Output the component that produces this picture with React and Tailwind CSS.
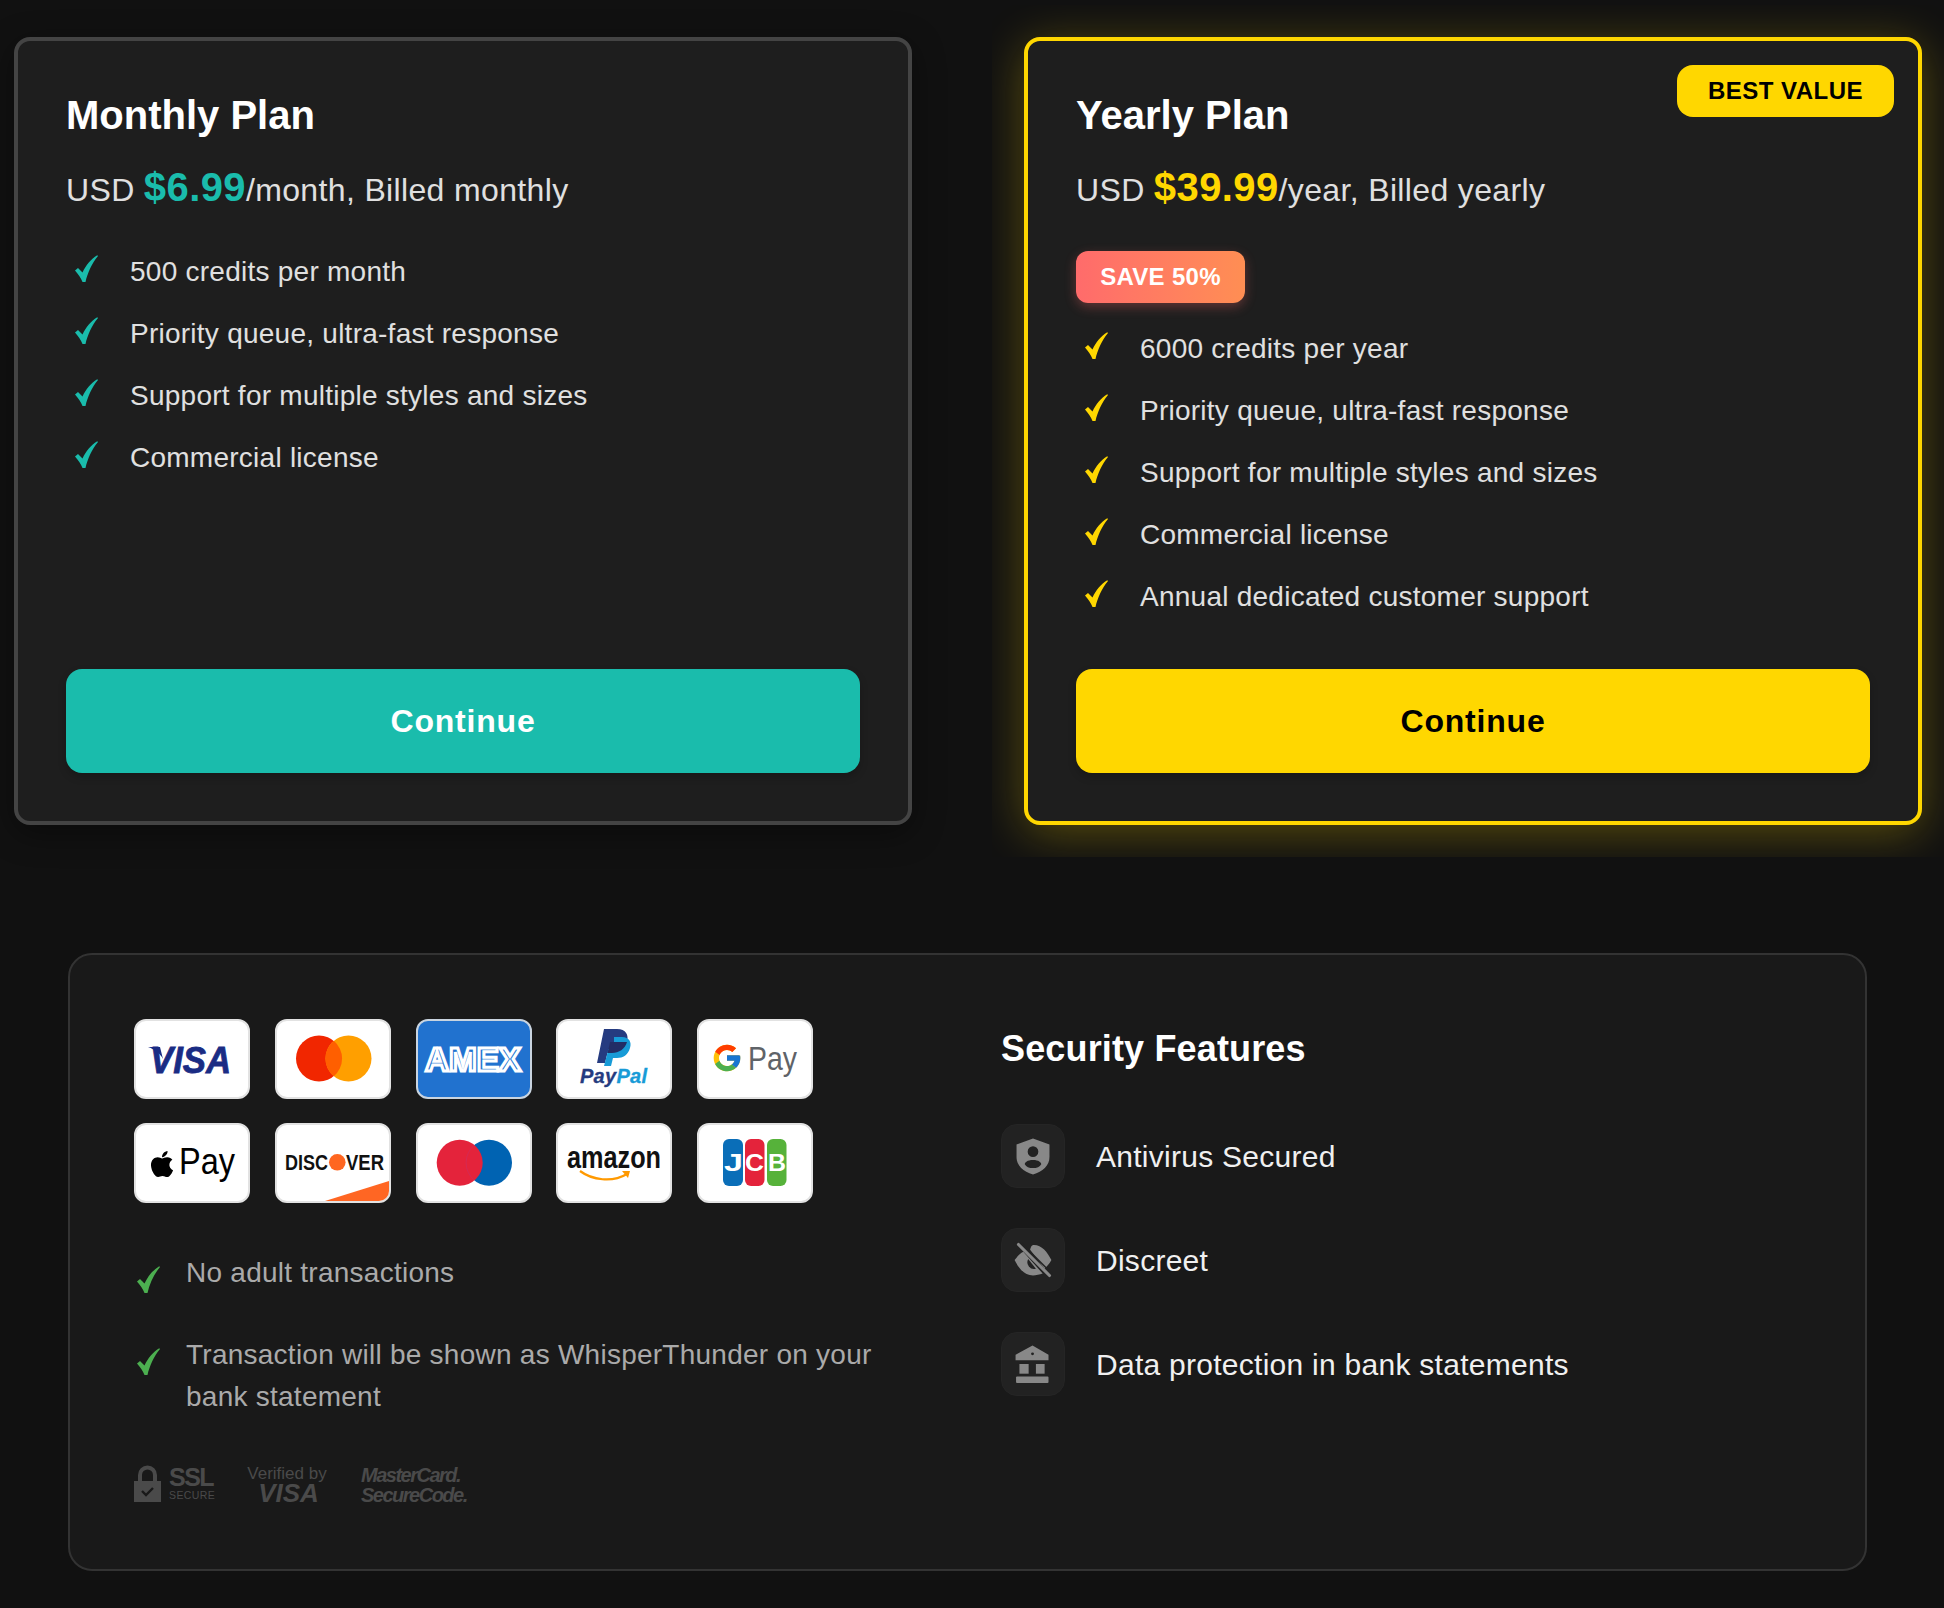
import React from "react";
import { FaApple } from "react-icons/fa";
import { FcGoogle } from "react-icons/fc";

const font = "font-['Liberation_Sans',Arial,sans-serif]";

function Check({ color, className = "" }) {
  return (
    <svg viewBox="0 0 23 27" className={`w-[23px] h-[27px] shrink-0 ${className}`} fill={color}>
      <path d="M0 15.500 L3 13 L7.500 17.500 C11 10 16 4 22.200 .2 L23 1 C17 8 12.500 18 10.500 27 L7.500 27 C6 23 3 19 0 15.500 Z" />
    </svg>
  );
}

function Plan({ title, price, suffix, accent, btnText, items, save }) {
  return (
    <div className="relative w-[898px] h-[788px] rounded-2xl border-4 bg-[#1e1e1e] p-12 flex flex-col" style={{ borderColor: accent.border, boxShadow: accent.shadow }}>
      {save && (
        <div className="absolute top-6 right-6 h-[52px] w-[217px] rounded-2xl bg-[#ffd700] text-black flex items-center justify-center font-bold text-[24px] tracking-[0.5px]">BEST VALUE</div>
      )}
      <h2 className="mt-px text-[40px] leading-[50px] font-bold text-white">{title}</h2>
      <p className="mt-[27px] h-10 leading-10 text-[32px] tracking-[0.35px] text-[#e0e0e0] whitespace-nowrap">
        USD <span className="text-[40px] font-bold tracking-[0.4px]" style={{ color: accent.color }}>{price}</span>{suffix}
      </p>
      {save && (
        <div className="mt-[44px] w-[169px] h-[52px] rounded-xl bg-linear-to-r from-[#ff6b6b] to-[#ff8e53] text-white font-bold text-[24px] tracking-[0.3px] flex items-center justify-center shadow-[0_4px_12px_rgba(255,107,107,0.3)]">SAVE 50%</div>
      )}
      <ul className={save ? "mt-[15px]" : "mt-[34px]"}>
        {items.map((t) => (
          <li key={t} className="h-[62px] flex items-center pl-[9px] gap-8 text-[28px] tracking-[0.25px] text-[#e0e0e0]">
            <Check color={accent.color} className="-translate-y-[4px]" />
            <span>{t}</span>
          </li>
        ))}
      </ul>
      <button className="mt-auto h-[104px] w-full rounded-2xl text-[32px] font-bold tracking-[0.8px] shadow-[0_4px_8px_rgba(0,0,0,0.2)]" style={{ background: accent.color, color: btnText }}>Continue</button>
    </div>
  );
}

function Pay({ children, bg = "bg-white", border = "border-[#e2e2e2]" }) {
  return (
    <div className={`h-20 rounded-xl border-2 overflow-hidden ${bg} ${border}`}>
      <svg viewBox="2 2 112 76" preserveAspectRatio="none" className="w-full h-full block" style={{ fontFamily: "'Liberation Sans', Arial, sans-serif" }}>{children}</svg>
    </div>
  );
}

const logos = [
  <Pay key="visa">
    <path d="M14 28 H26 L29 40 C26 34 20 30 14 28 Z" fill="#1a2c84" />
    <text x="16" y="54" fontSize="36" fontWeight="700" fontStyle="italic" fill="#1a2c84" stroke="#1a2c84" strokeWidth=".8" textLength="81" lengthAdjust="spacingAndGlyphs">VISA</text>
  </Pay>,
  <Pay key="mc">
    <circle cx="44" cy="39.500" r="23" fill="#f12600" />
    <circle cx="73.500" cy="39.500" r="23" fill="#ff9f00" />
    <path d="M58.750 21.800 A23 23 0 0 1 58.750 57.200 A23 23 0 0 1 58.750 21.800 Z" fill="#ff5f00" />
  </Pay>,
  <Pay key="amex" bg="bg-[#2172cf]" border="border-[#c9d4e0]">
    <text x="9" y="52" fontSize="33" fontWeight="700" fill="#2172cf" stroke="#fff" strokeWidth="3" textLength="96" lengthAdjust="spacingAndGlyphs">AMEX</text>
  </Pay>,
  <Pay key="paypal">
    <path d="M48 10 H61 C70 10 73 16 71 23 C69 31 63 34 56 34 H51.500 L49 44 H41 Z" fill="#253b80" />
    <path d="M58 18 H66 C73 18 76 23 74 29 C72 36 67 39 61 39 H57 L55 47 H48 L52.500 30 H58 Z" fill="#179bd7" />
    <path d="M52.500 30 L54 23 H71 C69 30 63 34 56 34 H51.500 Z" fill="#222d65" />
    <text x="24" y="64" fontSize="20" fontWeight="700" fontStyle="italic" stroke="#253b80" strokeWidth=".3" textLength="67"><tspan fill="#253b80">Pay</tspan><tspan fill="#179bd7" stroke="#179bd7">Pal</tspan></text>
  </Pay>,
  <Pay key="gpay">
    <foreignObject x="14" y="23" width="32" height="32"><FcGoogle size={32} /></foreignObject>
    <text x="51" y="51" fontSize="33" fill="#5f6368" textLength="49" lengthAdjust="spacingAndGlyphs">Pay</text>
  </Pay>,
  <Pay key="apple">
    <foreignObject x="13" y="26" width="30" height="31"><FaApple size={30} color="#000" /></foreignObject>
    <text x="45" y="51" fontSize="37" fill="#000" textLength="56" lengthAdjust="spacingAndGlyphs">Pay</text>
  </Pay>,
  <Pay key="disc">
    <text x="10" y="47" fontSize="21.500" fontWeight="700" fill="#111" textLength="43" lengthAdjust="spacingAndGlyphs">DISC</text>
    <circle cx="62.300" cy="39.300" r="8.300" fill="#ff6620" />
    <text x="71" y="47" fontSize="21.500" fontWeight="700" fill="#111" textLength="38" lengthAdjust="spacingAndGlyphs">VER</text>
    <path d="M50 78 L114 58 V78 Z" fill="#ff6623" />
  </Pay>,
  <Pay key="maestro">
    <circle cx="73" cy="39.700" r="23" fill="#0063b2" />
    <circle cx="43.700" cy="39.700" r="23" fill="#e4233b" />
    <path d="M58.400 22 A23 23 0 0 0 58.400 57.400" fill="none" stroke="#c5306a" strokeWidth=".5" />
  </Pay>,
  <Pay key="amazon">
    <text x="11" y="45" fontSize="31" fontWeight="700" fill="#111" textLength="94" lengthAdjust="spacingAndGlyphs">amazon</text>
    <path d="M24 48 C36 57 56 60 71 51" fill="none" stroke="#ff9900" strokeWidth="2.200" />
    <path d="M66 48 L74 48 L72 55 Z" fill="#ff9900" />
  </Pay>,
  <Pay key="jcb">
    <rect x="26" y="16" width="20" height="47" rx="6" fill="#0a6eb8" />
    <rect x="48" y="16" width="19.500" height="47" rx="6" fill="#e4233b" />
    <rect x="70" y="16" width="19.500" height="47" rx="6" fill="#56b23a" />
    <text x="27" y="48" fontSize="23" fontWeight="700" fill="#fff" textLength="19" lengthAdjust="spacingAndGlyphs">J</text>
    <text x="48" y="48" fontSize="23" fontWeight="700" fill="#fff" textLength="19" lengthAdjust="spacingAndGlyphs">C</text>
    <text x="71" y="48" fontSize="23" fontWeight="700" fill="#fff" textLength="18" lengthAdjust="spacingAndGlyphs">B</text>
  </Pay>,
];

function ShieldIcon() {
  return (
    <svg viewBox="0 0 64 64" className="w-16 h-16" fill="#888">
      <path fillRule="evenodd" d="M32 14 L49 20 V33 C49 42 42 48 32 51 C22 48 15 42 15 33 V20 Z M32 22 A5.500 5.500 0 1 0 32 33 A5.500 5.500 0 0 0 32 22 Z M32 36 C26 36 23.500 38.500 23.500 40.500 C25 43.500 28 44.500 32 44.500 C36 44.500 39 43.500 40.500 40.500 C40.500 38.500 38 36 32 36 Z" />
    </svg>
  );
}
function EyeIcon() {
  return (
    <svg viewBox="0 0 64 64" className="w-16 h-16" fill="#888">
      <path d="M13 32 C16 28 19 25 22 23.500 L42 46 C39 47 35 48 32 48 C23 48 17 40 13 32 Z M29 21.500 C30 17.500 31 16.500 33 16.500 C41 16.500 47 24 51 32 C49 36 46 39 44 41 Z" />
      <path d="M27 31 L35 41 A7 7 0 0 1 27 31 Z" fill="#222" />
      <path d="M17 16 L49 48" stroke="#888" strokeWidth="3.200" strokeLinecap="round" />
      <path d="M19.500 14 L52 46.500" stroke="#222" strokeWidth="1.500" />
    </svg>
  );
}
function BankIcon() {
  return (
    <svg viewBox="0 0 64 64" className="w-16 h-16" fill="#888">
      <path fillRule="evenodd" d="M31.500 13 L48 22.500 V28 H14 V22.500 Z M31.500 20 A1.500 1.500 0 1 0 31.500 23 A1.500 1.500 0 0 0 31.500 20 Z" />
      <rect x="18" y="32" width="9.500" height="10" />
      <rect x="35" y="32" width="9" height="10" />
      <rect x="14.500" y="45" width="33.500" height="6.500" rx="1" />
    </svg>
  );
}

function Feature({ icon, children }) {
  return (
    <div className="flex items-center gap-[31px] h-16">
      <div className="w-16 h-16 rounded-2xl bg-[#222] border border-[#252525] flex items-center justify-center overflow-hidden">{icon}</div>
      <span className="text-[30px] tracking-[0.27px] text-[#f0f0f0]">{children}</span>
    </div>
  );
}

export default function App() {
  return (
    <div className={`${font} bg-[#111] min-h-[1608px] w-[1944px] pt-[5px]`}>
      <div className="flex items-start">
        <div className="ml-[14px] mt-8 w-[978px] shrink-0">
          <div className="w-[898px]">
            <Plan
              title="Monthly Plan"
              price="$6.99"
              suffix="/month, Billed monthly"
              btnText="#fff"
              accent={{ color: "#1abcac", border: "#444", shadow: "0 8px 32px rgba(0,0,0,0.4)" }}
              items={["500 credits per month", "Priority queue, ultra-fast response", "Support for multiple styles and sizes", "Commercial license"]}
            />
          </div>
        </div>
        <div className="overflow-hidden w-[952px] pt-8 pb-8 pl-8">
          <Plan
            save
            title="Yearly Plan"
            price="$39.99"
            suffix="/year, Billed yearly"
            btnText="#000"
            accent={{ color: "#ffd700", border: "#ffd700", shadow: "0 8px 48px rgba(255,215,0,0.3)" }}
            items={["6000 credits per year", "Priority queue, ultra-fast response", "Support for multiple styles and sizes", "Commercial license", "Annual dedicated customer support"]}
          />
        </div>
      </div>

      <div className="mt-24 ml-[68px] w-[1799px] h-[618px] rounded-3xl border-2 border-[#333] bg-[#191919] p-16 flex">
        <div className="w-[790px] shrink-0">
          <div className="w-[679px] grid grid-cols-5 gap-x-[24.75px] gap-y-6">{logos}</div>
          <div className="mt-[49px] flex gap-[26px] text-[#aaa] text-[28px] leading-[42px] tracking-[0.25px]">
            <Check color="#4caf50" className="mt-[14px] ml-[3px]" />
            <span>No adult transactions</span>
          </div>
          <div className="mt-[40px] flex gap-[26px] text-[#aaa] text-[28px] leading-[42px] tracking-[0.25px]">
            <Check color="#4caf50" className="mt-[14px] ml-[3px]" />
            <span>Transaction will be shown as WhisperThunder on your bank statement</span>
          </div>
          <div className="mt-[47px] flex items-start text-[#4a4a4a]">
            <svg viewBox="0 0 27 37" className="w-[27px] h-[37px]">
              <path d="M6 16 V10 A7.500 7.500 0 0 1 21 10 V16" fill="none" stroke="#4a4a4a" strokeWidth="4" />
              <rect x="0" y="16" width="27" height="21" fill="#4a4a4a" />
              <path d="M8 26 L12 30 L19 23" fill="none" stroke="#191919" strokeWidth="2.400" />
            </svg>
            <div className="ml-2 w-[44px] flex flex-col">
              <span className="font-bold text-[25px] leading-[24px] tracking-[-1.5px]">SSL</span>
              <span className="text-[10.500px] leading-[12px] tracking-[0.4px] whitespace-nowrap">SECURE</span>
            </div>
            <div className="ml-[34px] w-[80px] flex flex-col items-center">
              <span className="text-[17px] leading-[18px] whitespace-nowrap">Verified by</span>
              <span className="font-bold italic text-[26px] leading-[20px] ml-[3px]">VISA</span>
            </div>
            <div className="ml-[34px] flex flex-col font-bold italic text-[20px] leading-[20px] tracking-[-1.5px]">
              <span>MasterCard.</span>
              <span>SecureCode.</span>
            </div>
          </div>
        </div>
        <div className="ml-[77px] flex-1">
          <h3 className="text-[36px] leading-[44px] font-bold text-white tracking-[0.15px] mt-2">Security Features</h3>
          <div className="mt-[53px] flex flex-col gap-10">
            <Feature icon={<ShieldIcon />}>Antivirus Secured</Feature>
            <Feature icon={<EyeIcon />}>Discreet</Feature>
            <Feature icon={<BankIcon />}>Data protection in bank statements</Feature>
          </div>
        </div>
      </div>
    </div>
  );
}
